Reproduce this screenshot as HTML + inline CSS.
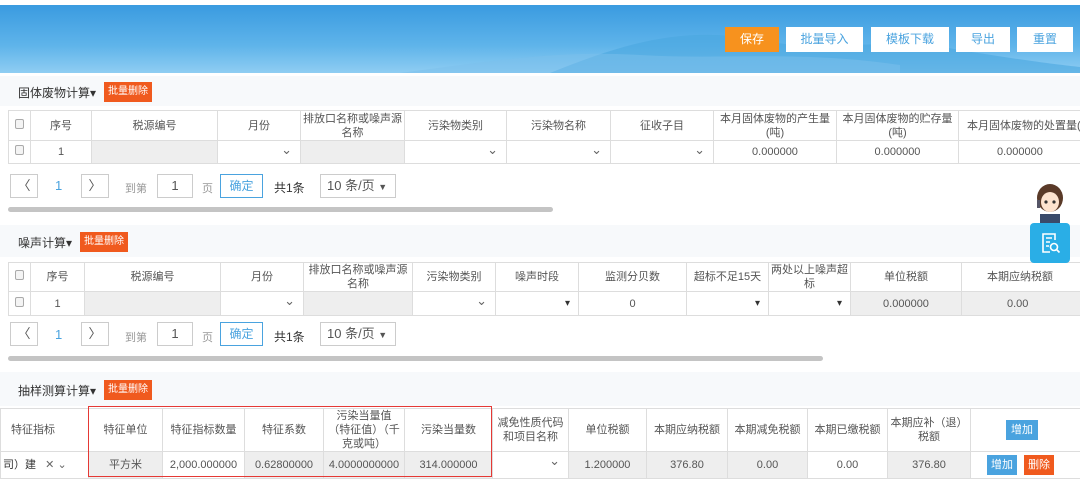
<!DOCTYPE html>
<html><head><meta charset="utf-8"><style>
*{box-sizing:border-box;margin:0;padding:0}
body{width:1080px;height:483px;overflow:hidden;background:#fff;font-family:"Liberation Sans","Noto Sans CJK SC",sans-serif;font-size:12px;color:#333;position:relative}
.a{position:absolute}
.banner{left:0;top:5px;width:1080px;height:68px;background:linear-gradient(180deg,#3a9be0 0%,#5fb4ea 60%,#8fcdf2 100%);overflow:hidden}
.btn{position:absolute;top:27px;height:25px;background:#fff;color:#4aa3df;font-size:12px;text-align:center;line-height:25px}
.sec{left:0;width:1080px;background:#f7f9fb}
.title{font-size:12px;color:#333}
.del{background:#f05a1e;color:#fff;font-size:10px;text-align:center;line-height:20px;height:20px}
table{position:absolute;border-collapse:collapse;table-layout:fixed;background:#fff}
td{border:1px solid #ddd;text-align:center;font-size:11px;color:#555;line-height:14px;padding:0;overflow:hidden;white-space:nowrap}
td.w{white-space:normal;padding:0 2px}
.g{background:#eee}
.cb{display:inline-block;width:9px;height:10px;border:1px solid #aaa;border-radius:2px;background:#f4f4f4}
.sel{position:relative}
.sel:after{content:"⌄";position:absolute;right:8px;top:2px;font-size:13px;color:#666}
.tri:after{content:"▾";position:absolute;right:8px;top:5px;font-size:10px;color:#333}
.pg{position:absolute;height:24px;border:1px solid #ccc;background:#fff;text-align:center;line-height:22px;font-size:13px;color:#555}
.sb{position:absolute;height:5px;background:#c4c4c4;border-radius:3px}
.pt{position:absolute;font-size:11px;color:#999}
</style></head><body>
<div class="a banner">
<svg width="1080" height="68" style="position:absolute;left:0;top:0">
<path d="M550 68 C620 40 680 20 760 35 C830 50 880 30 960 45 C1020 55 1060 60 1080 62 L1080 68Z" fill="#4aa6e0" opacity=".6"/>
<path d="M400 68 C500 55 560 45 640 50 C720 55 800 45 900 60 L900 68Z" fill="#7bc0ec" opacity=".5"/>
</svg>
</div>
<div class="btn" style="left:725px;width:54px;background:#f7921e;color:#fff">保存</div>
<div class="btn" style="left:786px;width:77px">批量导入</div>
<div class="btn" style="left:871px;width:78px">模板下载</div>
<div class="btn" style="left:956px;width:54px">导出</div>
<div class="btn" style="left:1017px;width:56px">重置</div>

<div class="a sec" style="top:76px;height:30px"></div>
<div class="a title" style="left:18px;top:84px">固体废物计算▾</div>
<div class="a del" style="left:104px;top:82px;width:48px">批量删除</div>
<table style="left:8px;top:110px;width:1090px">
<colgroup><col style="width:22px"><col style="width:61px"><col style="width:126px"><col style="width:83px"><col style="width:104px"><col style="width:102px"><col style="width:104px"><col style="width:103px"><col style="width:123px"><col style="width:122px"><col style="width:140px"></colgroup>
<tr style="height:30px"><td><span class="cb"></span></td><td>序号</td><td>税源编号</td><td>月份</td><td class="w">排放口名称或噪声源名称</td><td>污染物类别</td><td>污染物名称</td><td>征收子目</td><td class="w">本月固体废物的产生量(吨)</td><td class="w">本月固体废物的贮存量(吨)</td><td class="w" style="text-align:left;padding-left:8px">本月固体废物的处置量(吨)</td></tr>
<tr style="height:23px"><td><span class="cb"></span></td><td>1</td><td class="g"></td><td class="sel"></td><td class="g"></td><td class="sel"></td><td class="sel"></td><td class="sel"></td><td>0.000000</td><td>0.000000</td><td style="text-align:left;padding-left:38px">0.000000</td></tr>
</table>
<div class="pg" style="left:10px;top:174px;width:28px">〈</div>
<div class="a" style="left:55px;top:178px;color:#4aa3df;font-size:13px">1</div>
<div class="pg" style="left:81px;top:174px;width:28px">〉</div>
<div class="pt" style="left:125px;top:180px">到第</div>
<div class="pg" style="left:157px;top:174px;width:36px">1</div>
<div class="pt" style="left:202px;top:180px">页</div>
<div class="pg" style="left:220px;top:174px;width:43px;border-color:#4aa3df;color:#4aa3df;font-size:12px">确定</div>
<div class="a" style="left:274px;top:179px;font-size:12px">共1条</div>
<div class="pg" style="left:320px;top:174px;width:76px;text-align:left;padding-left:6px">10 条/页 <span style="font-size:9px">▼</span></div>
<div class="sb" style="left:8px;top:207px;width:545px"></div>

<div class="a sec" style="top:225px;height:32px"></div>
<div class="a title" style="left:18px;top:234px">噪声计算▾</div>
<div class="a del" style="left:80px;top:232px;width:48px">批量删除</div>
<table style="left:8px;top:262px;width:1080px">
<colgroup><col style="width:22px"><col style="width:54px"><col style="width:136px"><col style="width:83px"><col style="width:109px"><col style="width:83px"><col style="width:83px"><col style="width:108px"><col style="width:82px"><col style="width:82px"><col style="width:111px"><col style="width:127px"></colgroup>
<tr style="height:27px"><td><span class="cb"></span></td><td>序号</td><td>税源编号</td><td>月份</td><td class="w">排放口名称或噪声源名称</td><td>污染物类别</td><td>噪声时段</td><td>监测分贝数</td><td>超标不足15天</td><td class="w">两处以上噪声超标</td><td>单位税额</td><td style="text-align:left;padding-left:25px">本期应纳税额</td></tr>
<tr style="height:24px"><td><span class="cb"></span></td><td>1</td><td class="g"></td><td class="sel"></td><td class="g"></td><td class="sel"></td><td class="sel tri"></td><td>0</td><td class="sel tri"></td><td class="sel tri"></td><td class="g">0.000000</td><td class="g" style="text-align:left;padding-left:45px">0.00</td></tr>
</table>
<div class="pg" style="left:10px;top:322px;width:28px">〈</div>
<div class="a" style="left:55px;top:327px;color:#4aa3df;font-size:13px">1</div>
<div class="pg" style="left:81px;top:322px;width:28px">〉</div>
<div class="pt" style="left:125px;top:329px">到第</div>
<div class="pg" style="left:157px;top:322px;width:36px">1</div>
<div class="pt" style="left:202px;top:329px">页</div>
<div class="pg" style="left:220px;top:322px;width:43px;border-color:#4aa3df;color:#4aa3df;font-size:12px">确定</div>
<div class="a" style="left:274px;top:328px;font-size:12px">共1条</div>
<div class="pg" style="left:320px;top:322px;width:76px;text-align:left;padding-left:6px">10 条/页 <span style="font-size:9px">▼</span></div>
<div class="sb" style="left:8px;top:356px;width:815px"></div>

<div class="a sec" style="top:372px;height:34px"></div>
<div class="a title" style="left:18px;top:382px">抽样测算计算▾</div>
<div class="a del" style="left:104px;top:380px;width:48px">批量删除</div>
<table style="left:0px;top:408px;width:1080px">
<colgroup><col style="width:88px"><col style="width:74px"><col style="width:82px"><col style="width:79px"><col style="width:81px"><col style="width:88px"><col style="width:76px"><col style="width:78px"><col style="width:81px"><col style="width:80px"><col style="width:80px"><col style="width:83px"><col style="width:110px"></colgroup>
<tr style="height:41px"><td style="text-align:left;padding-left:10px">特征指标</td><td>特征单位</td><td>特征指标数量</td><td>特征系数</td><td class="w">污染当量值（特征值）（千克或吨）</td><td>污染当量数</td><td class="w">减免性质代码和项目名称</td><td>单位税额</td><td>本期应纳税额</td><td>本期减免税额</td><td>本期已缴税额</td><td class="w">本期应补（退）税额</td><td style="text-align:left;padding-left:35px"><span style="display:inline-block;background:#4aa3df;color:#fff;font-size:11px;padding:3px 5px">增加</span></td></tr>
<tr style="height:27px"><td style="text-align:left;padding-left:2px;color:#333">司）建 &nbsp; <span style="color:#666">✕ ⌄</span></td><td class="g">平方米</td><td>2,000.000000</td><td class="g">0.62800000</td><td class="g">4.0000000000</td><td class="g">314.000000</td><td class="sel"></td><td class="g">1.200000</td><td class="g">376.80</td><td class="g">0.00</td><td>0.00</td><td class="g">376.80</td><td style="text-align:left;padding-left:16px"><span style="display:inline-block;background:#4aa3df;color:#fff;font-size:11px;padding:3px 4px">增加</span> <span style="display:inline-block;background:#f05a1e;color:#fff;font-size:11px;padding:3px 4px;margin-left:4px">删除</span></td></tr>
</table>
<div class="a" style="left:88px;top:406px;width:404px;height:71px;border:1.5px solid #e53935"></div>

<svg class="a" style="left:1028px;top:180px" width="46" height="44" viewBox="0 0 46 44">
<ellipse cx="22" cy="18" rx="13" ry="14" fill="#5a3a28"/>
<ellipse cx="22" cy="22" rx="9" ry="10" fill="#fde3cf"/>
<circle cx="18" cy="22" r="1.6" fill="#333"/><circle cx="26" cy="22" r="1.6" fill="#333"/>
<rect x="9" y="20" width="3" height="8" fill="#556"/>
<path d="M12 34 h20 v10 h-20z" fill="#3a4a6a"/>
</svg>
<div class="a" style="left:1030px;top:223px;width:40px;height:40px;background:#2aaee6;border-radius:4px"></div>
<svg class="a" style="left:1040px;top:232px" width="22" height="22" viewBox="0 0 22 22" fill="none" stroke="#fff" stroke-width="1.6">
<path d="M15 8V2H3v18h7"/><path d="M6 6h6M6 10h4M6 14h3"/><circle cx="14" cy="15" r="3.5"/><path d="M16.5 17.5l3 3"/>
</svg>
</body></html>
